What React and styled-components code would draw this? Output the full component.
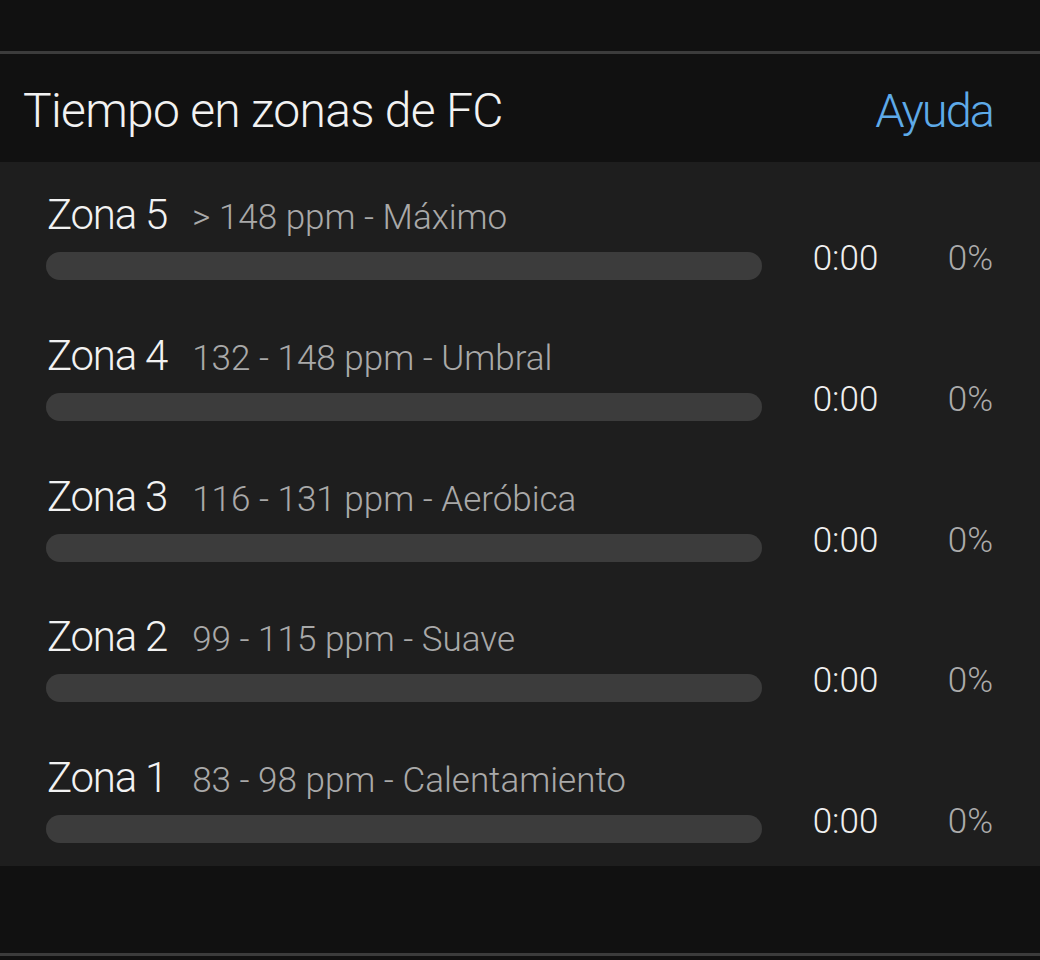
import React from "react";
import styled, { createGlobalStyle } from "styled-components";

const Global = createGlobalStyle`
  html, body { margin: 0; padding: 0; background: #111111; }
  body { font-family: Roboto, "Noto Sans", sans-serif; font-weight: 300; }
`;

const Page = styled.div`
  width: 1040px;
  height: 960px;
  background: #111111;
  display: flex;
  flex-direction: column;
  overflow: hidden;
`;

const TopBar = styled.div`
  height: 51px;
  flex: none;
  border-bottom: 3px solid #3c3c3c;
`;

const Header = styled.div`
  height: 108px;
  flex: none;
  box-sizing: border-box;
  padding: 0 47px 0 23px;
  display: flex;
  align-items: center;
  justify-content: space-between;
`;

const Title = styled.h1`
  margin: 0;
  font-size: 48px;
  font-weight: 300;
  letter-spacing: -0.7px;
  line-height: 56px;
  color: #f2f2f2;
  padding-top: 5px;
`;

const HelpLink = styled.span`
  font-size: 47px;
  letter-spacing: -2px;
  line-height: 56px;
  color: #5eaae8;
  padding-top: 5px;
`;

const Panel = styled.div`
  background: #1e1e1e;
  flex: none;
`;

const Row = styled.div`
  height: 140.75px;
  box-sizing: border-box;
  padding: 28px 47px 0 46px;
  display: flex;
  align-items: flex-start;
`;

const Left = styled.div`
  width: 716px;
  flex: none;
  display: flex;
  flex-direction: column;
  gap: 12px;
`;

const LabelLine = styled.div`
  display: flex;
  align-items: baseline;
  height: 50px;
  line-height: 50px;
  padding-left: 1px;
`;

const ZoneName = styled.span`
  font-size: 42px;
  letter-spacing: -1.2px;
  color: #f2f2f2;
`;

const Range = styled.span`
  font-size: 35px;
  color: #a9a9a9;
  margin-left: 25px;
`;

const Track = styled.div`
  height: 28px;
  border-radius: 14px;
  background: #3c3c3c;
  position: relative;
  overflow: hidden;
`;

const Fill = styled.div`
  height: 100%;
  background: #5eaae8;
`;

const Values = styled.div`
  flex: 1;
  display: flex;
  justify-content: flex-end;
  align-items: baseline;
  margin-top: 48px;
  line-height: 42px;
  font-size: 35px;
`;

const Time = styled.span`
  color: #f0f0f0;
  width: 64px;
  text-align: left;
`;

const Percent = styled.span`
  color: #ababab;
  margin-left: 71px;
`;

const Footer = styled.div`
  height: 87px;
  flex: none;
  border-bottom: 3px solid #3c3c3c;
`;

const zones = [
  { name: "Zona 5", range: "> 148 ppm - Máximo", time: "0:00", pct: 0 },
  { name: "Zona 4", range: "132 - 148 ppm - Umbral", time: "0:00", pct: 0 },
  { name: "Zona 3", range: "116 - 131 ppm - Aeróbica", time: "0:00", pct: 0 },
  { name: "Zona 2", range: "99 - 115 ppm - Suave", time: "0:00", pct: 0 },
  { name: "Zona 1", range: "83 - 98 ppm - Calentamiento", time: "0:00", pct: 0 },
];

export default function App() {
  return (
    <Page>
      <Global />
      <TopBar />
      <Header>
        <Title>Tiempo en zonas de FC</Title>
        <HelpLink>Ayuda</HelpLink>
      </Header>
      <Panel>
        {zones.map((z) => (
          <Row key={z.name}>
            <Left>
              <LabelLine>
                <ZoneName>{z.name}</ZoneName>
                <Range>{z.range}</Range>
              </LabelLine>
              <Track>
                <Fill style={{ width: `${z.pct}%` }} />
              </Track>
            </Left>
            <Values>
              <Time>{z.time}</Time>
              <Percent>{z.pct}%</Percent>
            </Values>
          </Row>
        ))}
      </Panel>
      <Footer />
    </Page>
  );
}
